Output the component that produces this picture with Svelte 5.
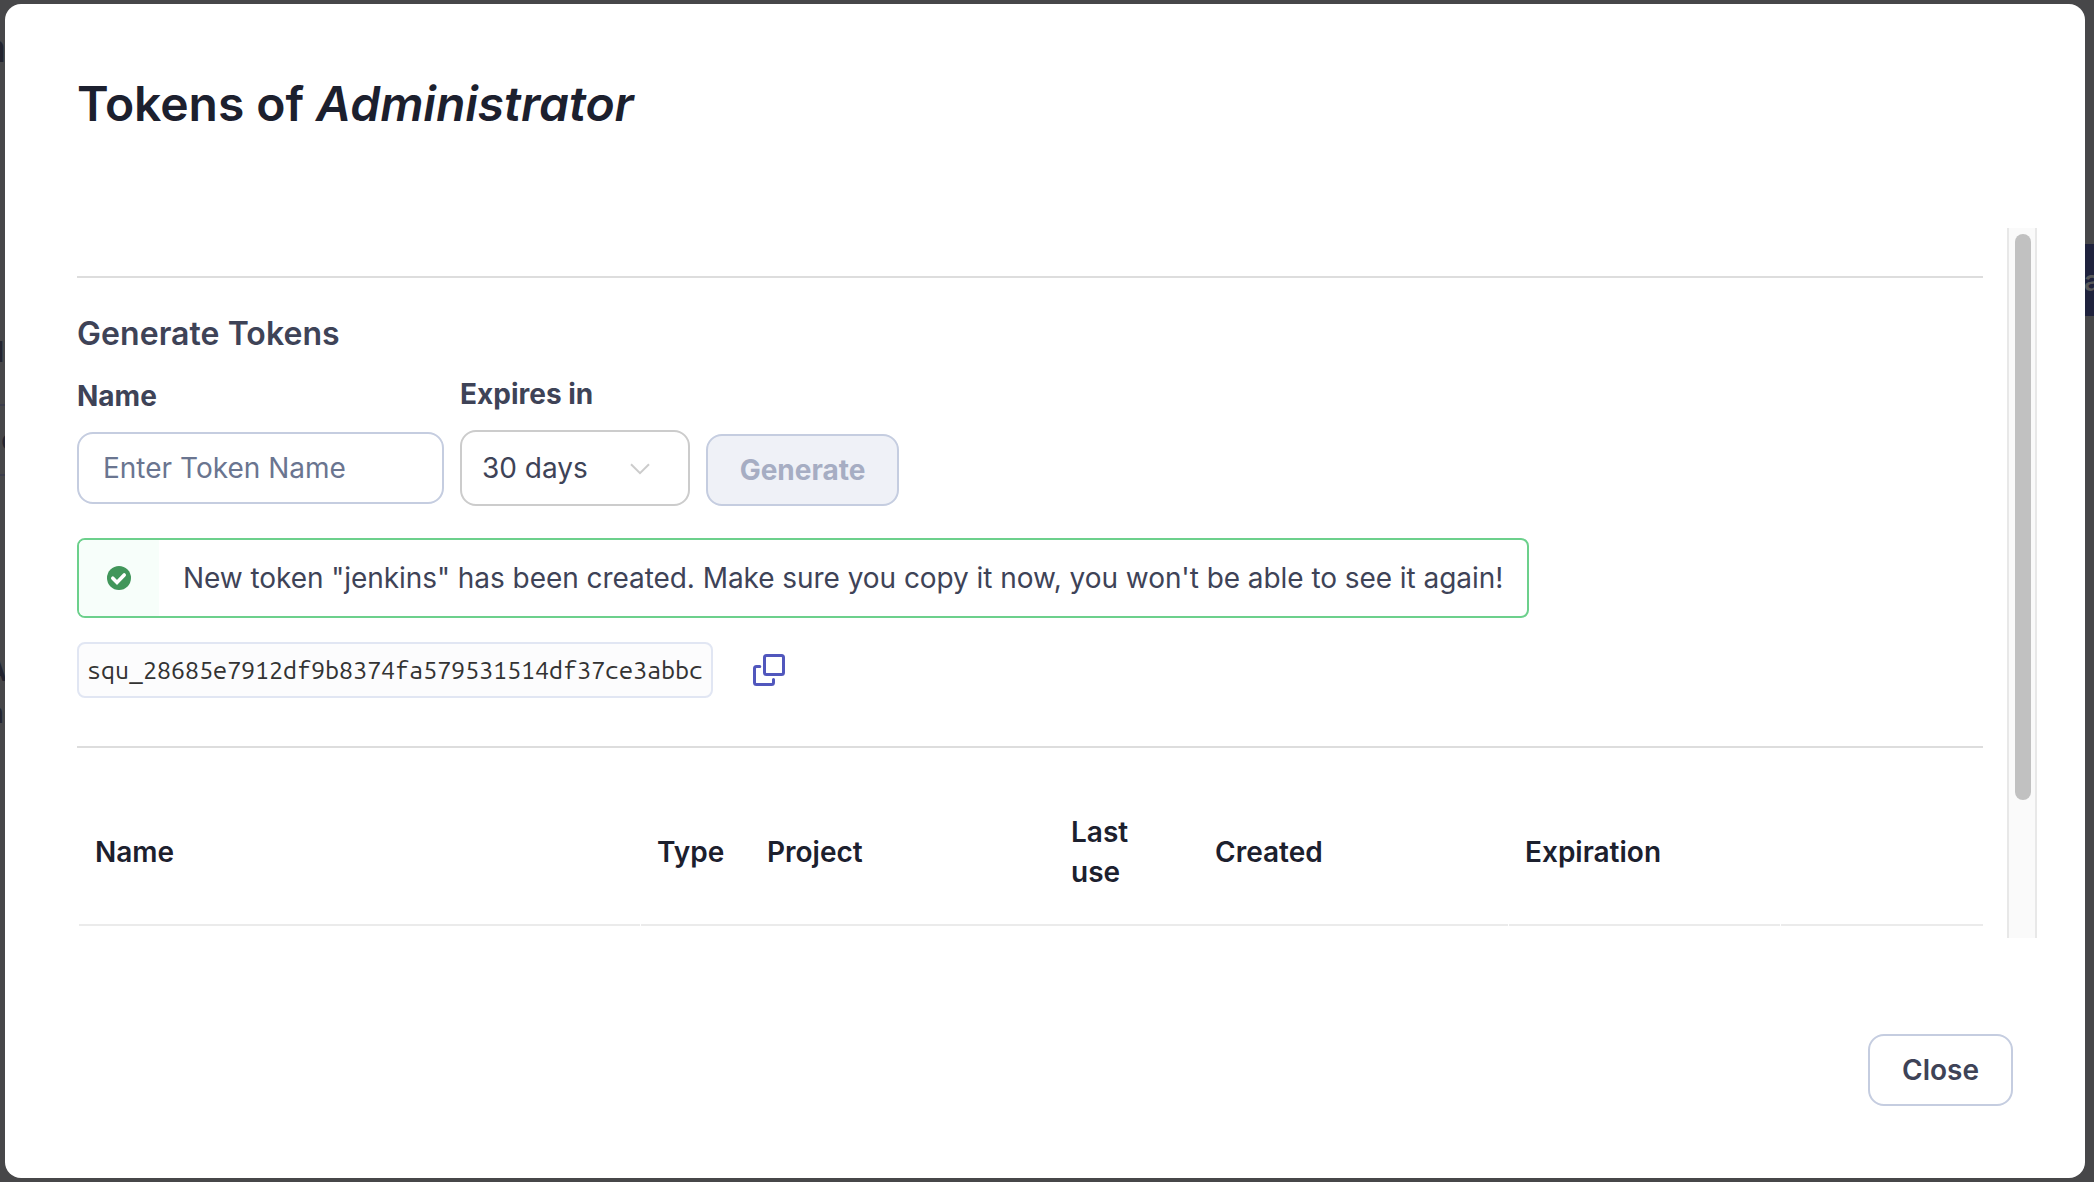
<script>
  const token = 'squ_28685e7912df9b8374fa579531514df37ce3abbc';
  const columns = ['Name', 'Type', 'Project', 'Last use', 'Created', 'Expiration', ''];
</script>

<div class="overlay">
  <div class="behind left" aria-hidden="true">
    <span class="frag f1">a</span>
    <span class="frag f2">l</span>
    <i class="rule r1"></i>
    <span class="frag f3">c</span>
    <i class="rule r2"></i>
    <span class="frag f4">A</span>
    <span class="frag f5">n</span>
  </div>
  <div class="behind right" aria-hidden="true"><span class="action">a</span></div>

  <div class="modal">
    <h1>Tokens of <em>Administrator</em></h1>

    <div class="viewport">
      <div class="content">
        <section class="generate">
          <h2>Generate Tokens</h2>
          <div class="form">
            <div class="field name">
              <label for="name">Name</label>
              <div class="box" id="name">Enter Token Name</div>
            </div>
            <div class="field expires">
              <label for="exp">Expires in</label>
              <div class="box" id="exp">
                30 days
                <svg width="20" height="12" viewBox="0 0 20 12"><path d="M1 1.2 10 10.2 19 1.2" fill="none" stroke="#ccc" stroke-width="2" /></svg>
              </div>
            </div>
            <button class="btn" disabled>Generate</button>
          </div>

          <div class="alert">
            <div class="badge">
              <svg width="24" height="24" viewBox="0 0 24 24"><circle cx="12" cy="12" r="12" fill="#41965a" /><path d="m5.8 12.2 4.2 4.2 7.2-7.4" fill="none" stroke="#fff" stroke-width="3.6" stroke-linecap="round" /></svg>
            </div>
            <p>New token "jenkins" has been created. Make sure you copy it now, you won't be able to see it again!</p>
          </div>

          <div class="token">
            <code>{token}</code>
            <svg width="32" height="32" viewBox="0 0 32 32" fill="none" stroke="#5157bd" stroke-width="3" stroke-linecap="round"><rect x="11.5" y="1.5" width="19" height="19" rx="2" /><path d="M6.8 12.5H3.5a2 2 0 0 0-2 2V28.5a2 2 0 0 0 2 2H18.5a2 2 0 0 0 2-2V25.5" /></svg>
          </div>
        </section>

        <div class="table">
          {#each columns as c}
            <div class="th">{c}</div>
          {/each}
        </div>
      </div>
      <div class="track"><div class="thumb"></div></div>
    </div>

    <footer><button class="btn close">Close</button></footer>
  </div>
</div>

<style>
  :global(body) { margin: 0; background: #474749; }
  * { box-sizing: border-box; }
  .overlay {
    position: relative; width: 2094px; height: 1182px; padding: 4px 9px 4px 5px;
    background: #474749; overflow: hidden;
    font: 400 28px/40px Inter, sans-serif; color: #3e4357;
  }
  .behind { position: absolute; top: 0; bottom: 0; overflow: hidden; }
  .left { left: 0; width: 6px; }
  .right { right: 0; width: 10px; }
  .frag { position: absolute; right: 1px; font-weight: 600; color: #23242f; }
  .f1 { top: 28px; font-size: 40px; right: 0; }
  .f2 { top: 332px; right: 2px; }
  .f3 { top: 420px; right: -11px; font-weight: 400; }
  .f4 { top: 651px; right: -1px; }
  .f5 { top: 693px; right: 2px; font-weight: 400; }
  .rule { position: absolute; left: 0; width: 6px; height: 2px; background: #3c3d4b; }
  .r1 { top: 404px; }
  .r2 { top: 474px; }
  .action {
    position: absolute; top: 244px; left: 0; width: 20px; height: 72px;
    font-weight: 600; line-height: 74px; color: #57585a; background: #1f223d;
  }
  .modal {
    position: relative; display: flex; flex-direction: column; height: 1174px;
    background: #fff; border-radius: 16px;
  }
  h1 { margin: 0; padding: 68px 72px 0; height: 224px; font-size: 48px; line-height: 64px; font-weight: 620; letter-spacing: -.05px; color: #1c202e; white-space: nowrap; }
  .viewport { display: flex; justify-content: space-between; height: 710px; padding: 0 48px 0 72px; overflow: hidden; }
  .content { width: 1906px; padding-top: 48px; }
  .generate { height: 472px; border: solid #dddddd; border-width: 2px 0; padding-top: 36px; }
  h2 { margin: 0; font-size: 32px; line-height: 40px; font-weight: 620; letter-spacing: .06px; }
  .form { display: flex; align-items: flex-end; gap: 16px; height: 152px; }
  .field label { display: block; font-weight: 660; line-height: 40px; }
  .box { display: flex; align-items: center; border-radius: 16px; background: #fff; }
  .name { width: 367px; padding-bottom: 2px; }
  .name .box { height: 72px; margin-top: 16px; padding: 0 24px; border: 2px solid #c5cde0; color: #6a7590; }
  .expires { width: 230px; }
  .expires .box { height: 76px; margin-top: 16px; padding: 0 38px 0 20px; border: 2px solid #ccc; justify-content: space-between; }
  .expires svg { margin-top: 2px; }
  .btn {
    width: 193px; height: 72px; padding: 0; border: 2px solid #c5cde0; border-radius: 16px;
    font: 660 28px/40px Inter, sans-serif; color: #a6adc3; background: #eff1f7;
  }
  .alert { display: flex; width: 1452px; height: 80px; margin-top: 32px; border: 2px solid #6cd08c; border-radius: 8px; overflow: hidden; }
  .badge { display: flex; align-items: center; justify-content: center; width: 80px; background: #f7fefa; }
  .alert p { margin: 0; padding-left: 24px; line-height: 76px; white-space: nowrap; letter-spacing: -.055px; }
  .token { display: flex; align-items: center; gap: 40px; margin-top: 24px; }
  code {
    width: 636px; height: 56px; padding-left: 8px; border: 2px solid #e1e6f3; border-radius: 8px; background: #fcfcfd;
    font: 25px/52px "Ubuntu Mono", "DejaVu Sans Mono", monospace; color: #333;
  }
  .table { display: grid; grid-template-columns: 562px 110px 304px 144px 310px 272px 1fr; padding-left: 2px; height: 178px; }
  .th { display: flex; align-items: center; padding: 31px 16px 0; font-weight: 640; color: #1c202e; border-bottom: 2px solid #ebebeb; }
  .th:nth-child(1), .th:nth-child(5), .th:nth-child(6) { margin-right: 1px; }
  .track { width: 30px; border: solid #e8e8e8; border-width: 0 2px; background: #fafafa; padding: 6px 5px 0 6px; }
  .thumb { width: 16px; height: 566px; border-radius: 8px; background: #c1c1c1; }
  footer { display: flex; justify-content: flex-end; padding: 96px 72px 0; }
  .close { width: 145px; background: #fff; color: #3e4357; font-weight: 600; }
</style>
